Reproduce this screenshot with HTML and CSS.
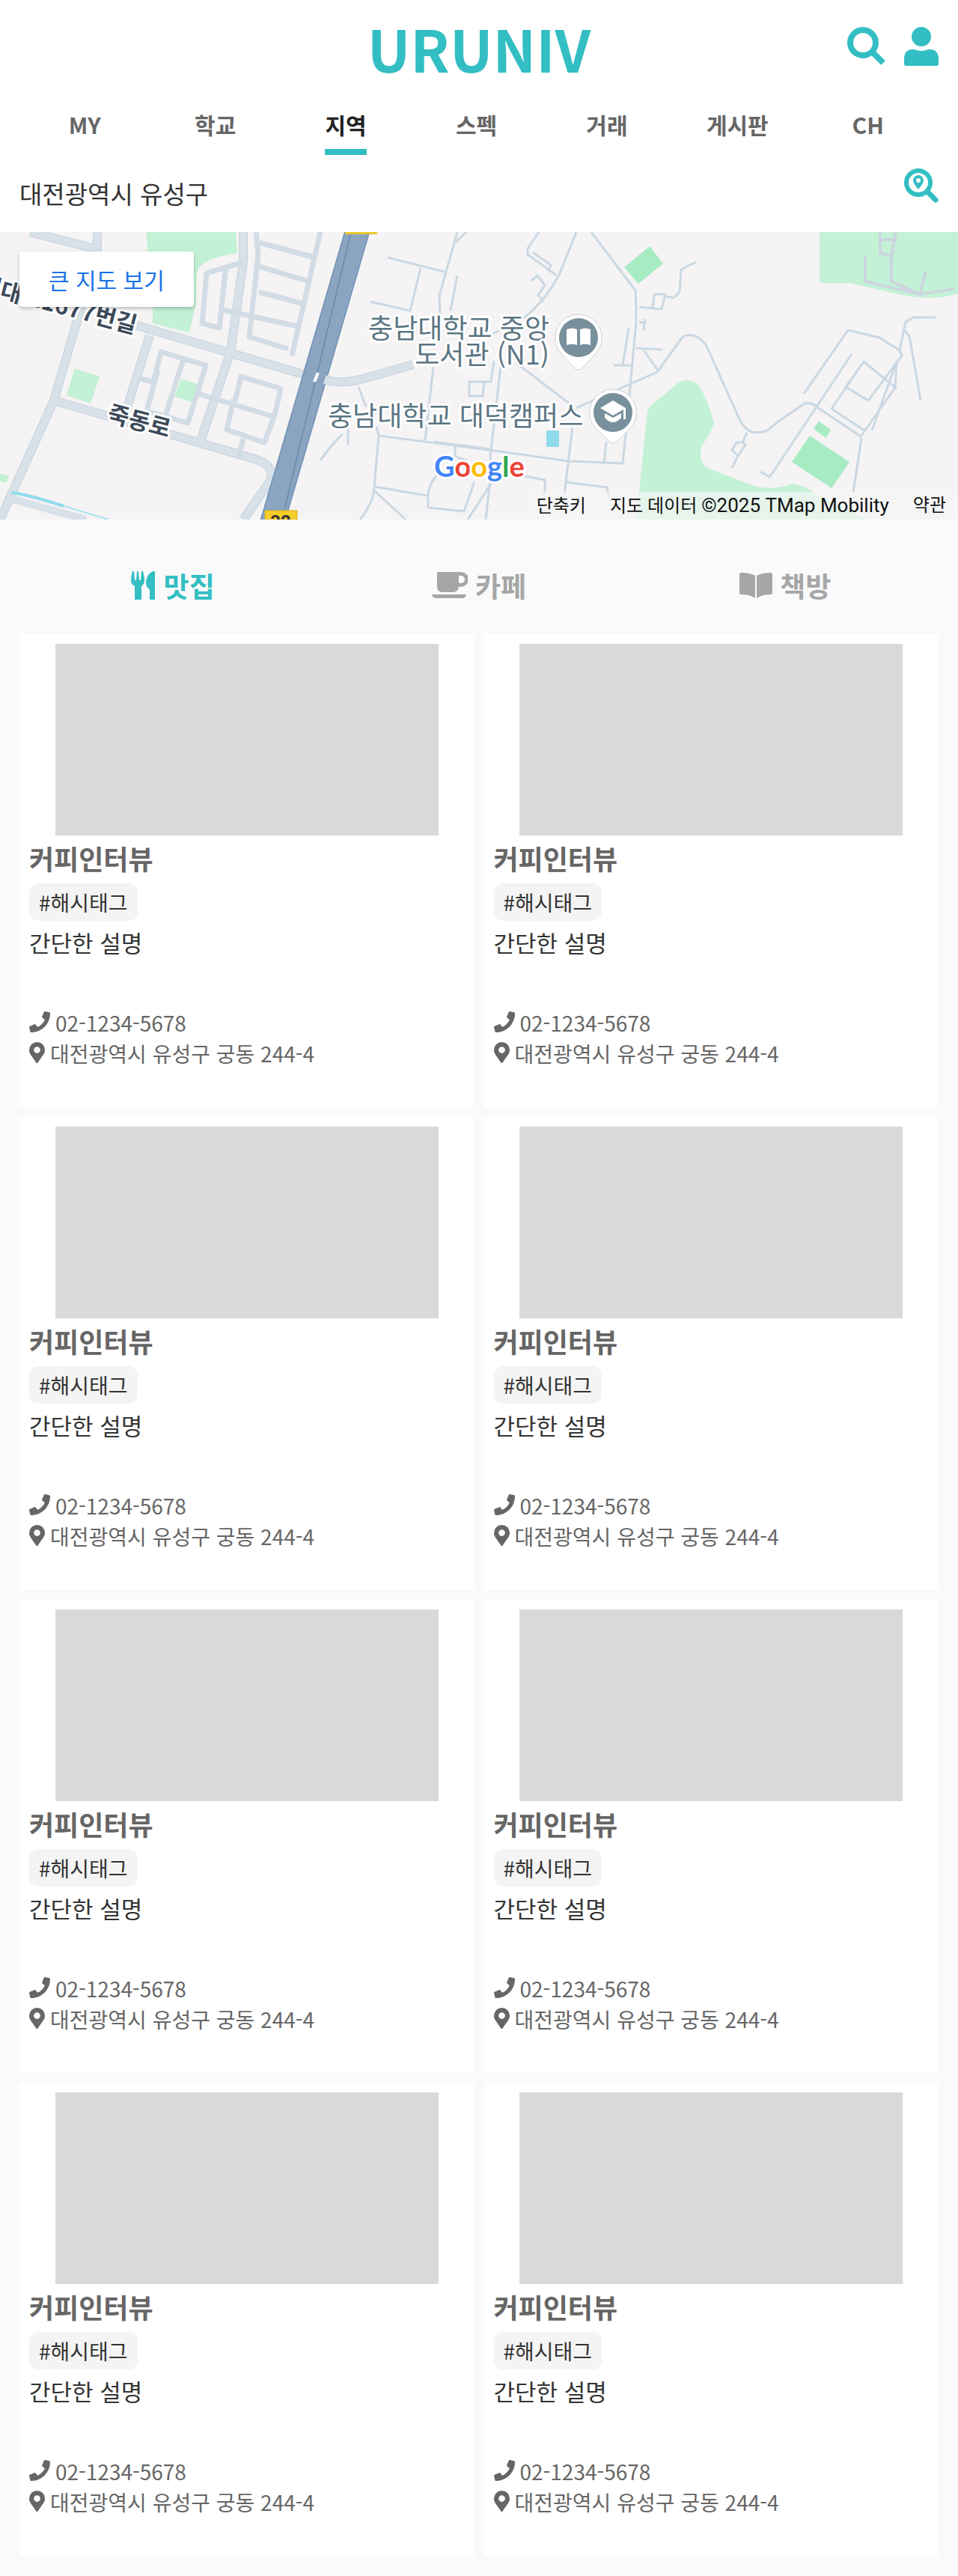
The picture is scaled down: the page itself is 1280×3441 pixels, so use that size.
FILE: index.html
```html
<!DOCTYPE html>
<html lang="ko">
<head>
<meta charset="utf-8">
<meta name="viewport" content="width=device-width, initial-scale=1">
<title>URUNIV</title>
<link rel="stylesheet" href="styles.css">
</head>
<body>
<svg class="sprite" aria-hidden="true">
  <symbol id="phone" viewBox="0 0 512 512"><path d="M493.400 24.600l-104-24c-11.300-2.600-22.900 3.300-27.500 13.900l-48 112c-4.200 9.800-1.400 21.300 6.900 28l60.600 49.600c-36 76.700-98.900 140.500-177.200 177.200l-49.600-60.600c-6.800-8.300-18.200-11.100-28-6.900l-112 48C3.900 366.500-2 378.100.6 389.400l24 104C27.100 504.200 36.700 512 48 512c256.100 0 464-207.500 464-464 0-11.200-7.700-20.900-18.600-23.400z"/></symbol>
  <symbol id="pin" viewBox="0 0 384 512"><path fill-rule="evenodd" d="M172 501.700C27 291 0 269.400 0 192a192 192 0 0 1 384 0c0 77.400-27 99-172 309.700a24 24 0 0 1-40 0zM192 272a80 80 0 1 0 0-160 80 80 0 0 0 0 160z"/></symbol>
</svg>

<header class="header">
  <h1 class="logo">URUNIV</h1>
  <div class="actions">
    <button class="icon-button" type="button" aria-label="검색"><svg width="52" height="52" viewBox="0 0 52 52"><path fill="none" stroke="currentColor" stroke-width="8" d="M34 34l14 14"/><circle cx="21" cy="21" r="17" fill="none" stroke="currentColor" stroke-width="8"/></svg></button>
    <button class="icon-button" type="button" aria-label="내 정보"><svg width="46" height="52" viewBox="0 0 46 52"><circle cx="23" cy="13" r="13"/><path d="M0 49V43Q0 30 12 30H14Q23 34 32 30H34Q46 30 46 43V49Q46 52 43 52H3Q0 52 0 49z"/></svg></button>
  </div>
</header>

<nav class="nav">
  <a href="#">MY</a><a href="#">학교</a><a href="#" class="active" aria-current="page">지역</a><a href="#">스펙</a><a href="#">거래</a><a href="#">게시판</a><a href="#">CH</a>
</nav>

<div class="location">
  <span>대전광역시 유성구</span>
  <button class="icon-button" type="button" aria-label="지역 검색"><svg width="46" height="46" viewBox="0 0 46 46"><circle cx="19" cy="19" r="16" fill="none" stroke="currentColor" stroke-width="6"/><path fill="none" stroke="currentColor" stroke-width="7" stroke-linecap="round" d="M32 32l10 10"/><path fill-rule="evenodd" d="M19 28Q12 20 12 16A7 7 0 0 1 26 16Q26 20 19 28zM19 19a3 3 0 1 0 0-6 3 3 0 0 0 0 6z"/></svg></button>
</div>

<section class="map" aria-label="지도">
  <svg class="map-art" viewBox="0 0 1280 384" preserveAspectRatio="xMidYMid slice">
    <rect width="1280" height="384" fill="#f5f3f4"/>
    <g fill="#c3f1d5">
      <path d="M195 0H315L317 28Q265 36 263 55L262 95 253 134 204 122V60L198 30z"/>
      <path d="M100 182l33 11-12 36-32-11zM242 196l22 7-7 24-24-7zM0 323q8 0 12 4l-4 8-8-2z"/>
      <path d="M1095 0H1280V82Q1250 92 1210 85L1135 68H1095z"/>
      <path d="M850 384L865 240Q867 234 872 230L905 202Q920 193 933 204Q946 224 954 255Q952 265 938 285Q932 306 945 315L1010 340Q1035 345 1060 336Q1078 340 1090 350L1160 384z"/>
    </g>
    <g fill="#a7ebc2"><path d="M834 47L868 19 886 42 853 69zM1094 253l16 11-6 11-17-12zM1082 272l53 35-24 35-53-35z"/></g>
    <g fill="none" stroke="#c5d3de" stroke-width="12" stroke-linejoin="round">
      <path d="M40 0L130 23V0M120 60L72 225 0 384M72 225L330 300Q372 310 360 334L325 384M180 124L405 190M200 138L168 240M325 0V40L308 160 266 285"/>
    </g>
    <g fill="none" stroke="#d8e0e8" stroke-width="10" stroke-linejoin="round">
      <path d="M40 0L130 23V0M120 60L72 225 0 384M72 225L330 300Q372 310 360 334L325 384M180 124L405 190M200 138L168 240M325 0V40L308 160 266 285M10 355L115 384"/>
    </g>
    <g fill="none" stroke="#d2dce5" stroke-width="7" stroke-linejoin="round">
      <path d="M342 0L345 30 333 140 385 156M428 0L390 165M346 14L421 34M346 46L413 66M346 80L406 96M298 104L398 126M325 40L276 55 270 122 293 128 302 45M185 195l20 5 10-40 60 18-24 77-55-16 15-55M245 170l-24 75M262 215l105 32M313 229l9-36 53 16-8 36-14 36-50-17 9-40M325 276l-6 24"/>
    </g>
    <path d="M480-10L362 394" stroke="#6f91b5" stroke-width="33"/>
    <path d="M480-10L362 394" stroke="#8ba5c1" stroke-width="30"/>
    <path d="M469 0L377 384" stroke="#6f91b5" stroke-width="2"/>
    <path d="M425 188l-5 12" stroke="#fff" stroke-width="4"/>
    <path d="M434 197Q455 204 485 196L552 177" fill="none" stroke="#c5d3de" stroke-width="12"/>
    <path d="M434 197Q455 204 485 196L552 177" fill="none" stroke="#d8e0e8" stroke-width="10"/>
    <g fill="none" stroke="#cad8e3" stroke-width="3" stroke-linejoin="round">
      <path d="M518 34L594 53M562 48L548 105 495 93M611 0L587 85 588 110M623 0L606 16M611 58L602 105M479 207l10 26M579 180L568 278M428 305Q446 280 458 270M465 260v24M503 260L506 272 500 340Q500 360 481 384M506 272L660 292 760 306 832 309 838 250 850 120Q850 95 849 78L790 0M770 0L748 55Q730 90 700 115L650 140M720 0L705 22 705 30 744 58M712 27l24 17-4 8M710 65l8-7 10 13-9 13 7 9M670 170L655 300 660 330 625 384M690 175L762 230M580 280l75 10M608 285v15l16 5M660 172l-4 28h-29v19h18l2-19M765 260L754 350M810 280l-3 30M655 330l-6 54M500 340l70 12M572 368V350Q575 330 590 320M572 368l48 5 14-40M500 345l42 39M700 326l28 5v20M756 334l55 7 4 18"/>
      <path d="M770 235L878 187 912 140Q928 132 943 150L988 250Q1000 275 1025 265L1040 253 1075 229Q1085 227 1092 234L1150 273 1196 208 1198 173 1165 265M850 155l35 2M860 158l20 28M854 100l30 3 5-20h-15l-2 18M890 86l10 2 8-8 2-30 20-10M854 120l9 2m-1-6l-2 15M840 128l-8 50M820 178h24M1074 216L1133 131 1175 141 1202 158 1205 165 1160 225 1130 207 1154 173 1198 209M1154 173L1111 236 1155 265M1138 163L1034 319 1028 327 1016 320M1202 158L1210 120 1220 114 1250 114M1209 132l6 7L1230 225M1151 275L1140 348M998 268l-6 13-8 0-6 10 8 8 10-15-4-3M986 299l-8 16"/>
    </g>
    <g fill="none" stroke="#ccd5df" stroke-width="4"><path d="M1156 32V66L1229 83 1275 76M1176 0V28L1191 32 1197 0M1176 10h21M1191 32V66L1229 83 1237 52"/></g>
    <path d="M15 348Q35 350 85 366" fill="none" stroke="#8edbee" stroke-width="4"/>
    <path d="M85 366L145 384" fill="none" stroke="#a9e4f1" stroke-width="2"/>
    <rect x="730" y="265" width="17" height="22" rx="2" fill="#8edbee"/>
    <path d="M461 0h43v3h-43z" fill="#e9c62f"/><path d="M354 372h43v12h-43z" fill="#f6cd28" stroke="#d6ae1e"/>
    <text x="375" y="395" text-anchor="middle" class="shield">32</text>
    <g class="road-label"><text transform="translate(-29 80) rotate(15)">성대로1677번길</text><text transform="translate(142 252) rotate(15)">죽동로</text></g>
    <g class="place-label"><text x="734" y="142" text-anchor="end">충남대학교 중앙</text><text x="734" y="177" text-anchor="end">도서관 (N1)</text><text x="438" y="259">충남대학교 대덕캠퍼스</text></g>
    <g>
      <path d="M773 110a31 31 0 0 1 24 51L779 181Q773 187 767 181L749 161A31 31 0 0 1 773 110z" fill="#fff" stroke="#cbd2d6"/>
      <circle cx="773" cy="141" r="26" fill="#78909c"/>
      <path d="M757 130q8-3 14 0v21q-7-3-14 0zM775 130q7-3 14 0v21q-7-3-14 0z" fill="#fff"/>
    </g>
    <g>
      <path d="M819 210a31 31 0 0 1 24 51L825 279Q819 285 813 279L795 261A31 31 0 0 1 819 210z" fill="#fff" stroke="#cbd2d6"/>
      <circle cx="819" cy="241" r="26" fill="#78909c"/>
      <path d="M802 235l17-10 17 10v15h-3v-13l-14 8zM808 242l11 6 11-6v6q-11 12-22 0z" fill="#fff"/>
    </g>
    <g class="google"><text x="580" y="327"><tspan fill="#4285f4">G</tspan><tspan fill="#ea4335">o</tspan><tspan fill="#fbbc04">o</tspan><tspan fill="#4285f4">g</tspan><tspan fill="#34a853">l</tspan><tspan fill="#ea4335">e</tspan></text></g>
  </svg>
  <a class="map-open" href="#">큰 지도 보기</a>
  <div class="map-legal"><button type="button">단축키</button><span>지도 데이터 <span class="copyright">©2025 TMap Mobility</span></span><a href="#">약관</a></div>
</section>

<main class="main">
  <div class="tabs">
    <button class="tab selected" type="button"><svg width="34" height="38" viewBox="0 0 34 38"><path d="M2 0H4L5 12H7L8 0H10L11 12H13L14 0H16Q18 8 18 13 18 17 14 20V38H5V20Q0 17 0 13 0 8 2 0zM32 0V38H25V24Q20 22 20 14Q22 2 30 0z"/></svg>맛집</button>
    <button class="tab" type="button"><svg width="48" height="36" viewBox="0 0 48 36"><path fill-rule="evenodd" d="M8 0H39A10 10 0 0 1 39 20H36Q35 27 28 27H14Q7 27 7 20V1Q7 0 8 0zM36 5V15H39A5 5 0 0 0 39 5zM0 30H46Q45 35 41 35H5Q1 35 0 30z"/></svg>카페</button>
    <button class="tab" type="button"><svg width="44" height="34" viewBox="0 0 44 34"><path d="M0 2Q0 0 3 0 14 0 21 4V34Q13 29 2 29 0 29 0 27zM44 2Q44 0 41 0 30 0 23 4V34Q31 29 42 29 44 29 44 27z"/></svg>책방</button>
  </div>
  <div class="grid" id="places"></div>
</main>

<template id="card">
  <article class="card">
    <div class="photo"></div>
    <h2 class="name">커피인터뷰</h2>
    <span class="tag">#해시태그</span>
    <p class="desc">간단한 설명</p>
    <p class="info"><svg width="28" height="28"><use href="#phone"/></svg>02-1234-5678</p>
    <p class="info"><svg width="21" height="28"><use href="#pin"/></svg>대전광역시 유성구 궁동 244-4</p>
  </article>
</template>
<script src="script.js"></script>
</body>
</html>
```
FILE: styles.css
```css
* { box-sizing: border-box; }
body {
  margin: 0;
  background: #fafafa;
  color: #333;
  font-family: "Noto Sans CJK KR", sans-serif;
}
h1, h2, p { margin: 0; }
a { text-decoration: none; }
button {
  padding: 0;
  border: 0;
  background: none;
  font: inherit;
  color: inherit;
}
svg { fill: currentColor; }
.sprite { position: absolute; width: 0; height: 0; }

.header {
  display: grid;
  grid-template-columns: 1fr auto 1fr;
  align-items: start;
  height: 134px;
  padding: 8px 26px 0;
  background: #fff;
  color: #32bec3;
}
.logo {
  grid-column: 2;
  font-size: 77px;
  line-height: 112px;
}
.actions {
  display: flex;
  justify-content: flex-end;
  gap: 24px;
  padding-top: 28px;
}
.icon-button { display: block; color: #32bec3; }
.icon-button svg { display: block; }

.nav {
  display: flex;
  height: 74px;
  padding: 0 33px 0 26px;
  background: #fff;
  text-align: center;
}
.nav a {
  flex: 1;
  color: #666;
  font-size: 30px;
  font-weight: 700;
  line-height: 65px;
}
.nav .active { color: #222; }
.nav .active::after {
  display: block;
  width: 56px;
  height: 8px;
  margin: 0 auto;
  background: #32bec3;
  content: "";
}

.location {
  display: flex;
  justify-content: space-between;
  align-items: flex-start;
  height: 102px;
  padding: 17px 26px 0;
  background: #fff;
  font-size: 33px;
  line-height: 66px;
}

.map { position: relative; height: 384px; overflow: hidden; }
.map-art { display: block; width: 100%; height: 100%; }
.road-label text, .place-label text, .google text {
  paint-order: stroke;
  stroke: #fff;
  stroke-width: 6px;
  stroke-linejoin: round;
}
.road-label { font-size: 31px; font-weight: 700; fill: #3c4a5a; }
.place-label { font-size: 36px; fill: #5b7583; }
.google { font: 700 38px Lato, sans-serif; }
.shield { font: 700 24px Roboto, sans-serif; fill: #333; }
.map-open {
  position: absolute;
  top: 26px;
  left: 26px;
  padding: 0 39px;
  border-radius: 4px;
  background: #fff;
  box-shadow: 0 2px 4px rgba(0, 0, 0, .25);
  color: #1a73e8;
  font-size: 30px;
  line-height: 74px;
}
.map-legal {
  position: absolute;
  right: 0;
  bottom: 0;
  display: flex;
  gap: 32px;
  padding: 0 16px 0 6px;
  background: rgba(245, 245, 245, .7);
  color: #111;
  font: 24px/36px Roboto, "Noto Sans CJK KR", sans-serif;
}
.map-legal a { color: inherit; }
.copyright { font-size: 26px; }

.main { padding: 0 26px 27px; }
.tabs {
  display: grid;
  grid-template-columns: repeat(3, 1fr);
  height: 153px;
  padding-top: 58px;
}
.tab {
  display: flex;
  justify-content: center;
  align-items: center;
  gap: 10px;
  height: 60px;
  color: #a6a6a6;
  font-size: 37px;
  font-weight: 700;
}
.tab.selected { color: #32bec3; }

.grid {
  display: grid;
  grid-template-columns: repeat(2, 1fr);
  gap: 13px;
}
.card {
  height: 632px;
  padding: 13px;
  background: #fff;
}
.photo {
  width: 88%;
  height: 256px;
  margin: 0 auto;
  background: #d9d9d9;
}
.name {
  margin-top: 4px;
  color: #666;
  font-size: 36px;
  line-height: 52px;
}
.tag {
  display: block;
  width: fit-content;
  margin-top: 8px;
  padding: 0 13px;
  border-radius: 12px;
  background: #f4f4f4;
  font-size: 28px;
  line-height: 50px;
}
.desc {
  margin-top: 7px;
  font-size: 31px;
  line-height: 44px;
}
.info {
  display: flex;
  gap: 7px;
  color: #666;
  font-size: 28px;
  line-height: 41px;
}
.desc + .info { margin-top: 65px; }
.info svg { margin-top: 5px; }
```
FILE: script.js
```js
const card = document.getElementById("card");
const places = document.getElementById("places");
for (let i = 0; i < 8; i += 1) {
  places.append(card.content.cloneNode(true));
}
```
